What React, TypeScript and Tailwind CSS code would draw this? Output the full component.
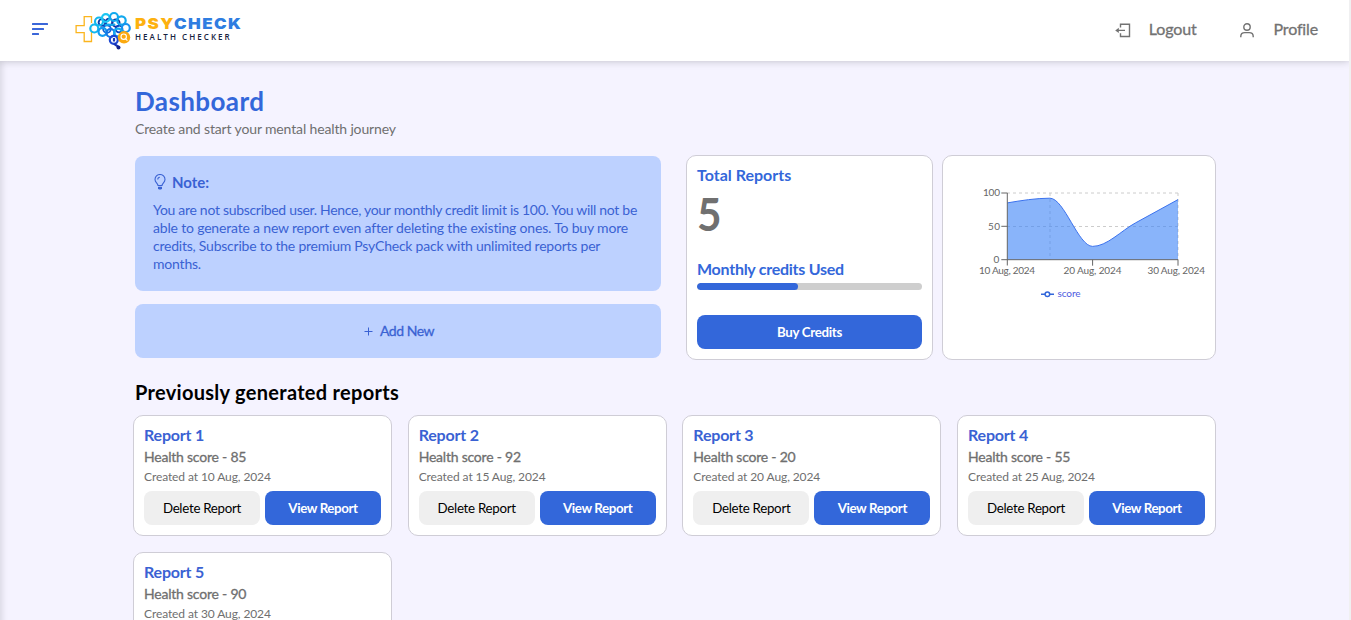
const TEXT = "font-['Lato',sans-serif] whitespace-nowrap";
const MEDIUM = "[-webkit-text-stroke:0.3px_currentColor]";

function Logo() {
  return (
    <div className="flex h-[42px] items-start">
      <svg width="58" height="42" viewBox="74 9 58 42" fill="none">
        <path d="M84.200 24.700V15.700h7.300v24.800h-7.300v-8.800h-8.100v-7z" stroke="#fbb51e" strokeWidth="1.300" />
        <path d="M91.500 22v9" stroke="#fff" strokeWidth="1.800" />
        <g strokeWidth="1.900">
          <circle cx="102" cy="21.500" r="3.400" stroke="#0a3fae" />
          <circle cx="109" cy="21" r="3.400" stroke="#0a3fae" />
          <circle cx="116" cy="22" r="3.600" stroke="#12309a" />
          <circle cx="119" cy="28" r="3.400" stroke="#0a46c4" />
          <circle cx="107" cy="28" r="3.800" stroke="#0b62d6" />
        </g>
        <g strokeWidth="2.200">
          <circle cx="94.300" cy="27.500" r="4" stroke="#12b7ee" />
          <circle cx="99" cy="20.500" r="4" stroke="#12b7ee" />
          <circle cx="105.800" cy="17" r="3.800" stroke="#1bc5f2" />
          <circle cx="114" cy="16" r="4" stroke="#12a9ee" />
          <circle cx="121.500" cy="19.500" r="4.200" stroke="#12a9ee" />
          <circle cx="125.800" cy="27" r="4" stroke="#1893ee" />
          <circle cx="102.500" cy="30.800" r="4" stroke="#129cf0" />
          <circle cx="110.500" cy="32" r="4" stroke="#1377e6" />
          <circle cx="118" cy="31.500" r="3.800" stroke="#12a9ee" />
          <path d="M105 24.500c3-2.500 7 1 10-1.500" stroke="#12a9ee" />
          <circle cx="113.800" cy="38.800" r="4" stroke="#1e48d2" />
          <path d="M114 37v3.500M114.500 42.500c1 2.500 3 1.500 4 4" stroke="#1733b5" />
        </g>
        <circle cx="118.500" cy="46.500" r="2" fill="#12208a" />
        <circle cx="124" cy="36.300" r="6.200" fill="#fba90f" />
        <circle cx="123.700" cy="35.700" r="2.700" stroke="#fff" strokeWidth="1.100" />
        <path d="M125.600 37.800l1.800 1.900" stroke="#fff" strokeWidth="1.100" />
      </svg>
      <div className="flex flex-col pl-[3px] pt-[5px]">
        <div className="w-max origin-left scale-x-[1.130] whitespace-nowrap font-['Inter',sans-serif] text-[15px] font-black leading-[18px] tracking-[1.250px] text-[#2f7de1]">
          <span className="text-[#fdb10f]">PSY</span>CHECK
        </div>
        <div className="w-max whitespace-nowrap font-['Open_Sans',sans-serif] text-[8px] font-semibold leading-[8px] tracking-[2.050px] text-[#17233f]">
          HEALTH CHECKER
        </div>
      </div>
    </div>
  );
}

function Header() {
  return (
    <header className="relative z-10 flex h-[61px] shrink-0 items-center bg-white pl-[32px] pr-[31px] shadow-[0_0_8px_rgba(0,0,0,0.22)]">
      <svg width="16" height="12" viewBox="0 0 16 12" className="mb-[3px]" fill="#3a66d9">
        <rect y="0" width="16" height="2" rx="0.5" />
        <rect y="5" width="12" height="2" rx="0.5" />
        <rect y="10" width="7" height="2" rx="0.5" />
      </svg>
      <div className="ml-[26px]">
        <Logo />
      </div>
      <nav className="ml-auto flex items-center text-[#727272]">
        <svg width="16" height="15" viewBox="0 0 16 15" fill="none" stroke="currentColor" strokeWidth="1.400">
          <path d="M5.500 4.500V1.200h9v12.300h-9v-3.300M10 7.400H2" />
          <path d="M3.800 4.800L.2 7.400l3.600 2.600z" fill="currentColor" stroke="none" />
        </svg>
        <span className={`${TEXT} ${MEDIUM} -mt-[3px] ml-[18px] text-[16px] leading-[20px] tracking-[-0.150px]`}>Logout</span>
        <svg className="ml-[43px]" width="14" height="15" viewBox="0 0 14 15" fill="none" stroke="currentColor" strokeWidth="1.400">
          <circle cx="7" cy="4" r="3.200" />
          <path d="M.8 14.300v-1c0-2.200 1.800-3.700 4-3.700h4.400c2.200 0 4 1.500 4 3.700v1" />
        </svg>
        <span className={`${TEXT} ${MEDIUM} -mt-[3px] ml-[20px] text-[16px] leading-[20px] tracking-[-0.150px]`}>Profile</span>
      </nav>
    </header>
  );
}

function NoteCard() {
  return (
    <section className="h-[135px] rounded-[8px] bg-[#bdd1ff] px-[18px] pt-[17px] text-[#3a62d3]">
      <div className="flex h-[18px] items-center">
        <svg className="ml-[1px] mr-[6px]" width="12" height="16" viewBox="0 0 12 16" fill="none" stroke="currentColor" strokeWidth="1.100">
          <path d="M4 11.500C4 9.500 1 8.500 1 5.500a5 5 0 0 1 10 0c0 3-3 4-3 6zM3.800 5.500c0-1.300.8-2.200 2-2.200M4.200 13.300h3.600" />
          <path d="M4 13h4v1.300L7.200 15.500H4.800L4 14.300z" fill="currentColor" stroke="none" />
        </svg>
        <h2 className={`${TEXT} text-[15px] font-bold`}>Note:</h2>
      </div>
      <div className="mt-[10px] text-[14px] leading-[18px]">
        <p className={`${TEXT} w-max tracking-[-0.300px]`}>You are not subscribed user. Hence, your monthly credit limit is 100. You will not be</p>
        <p className={`${TEXT} w-max tracking-[-0.180px]`}>able to generate a new report even after deleting the existing ones. To buy more</p>
        <p className={`${TEXT} w-max tracking-[-0.230px]`}>credits, Subscribe to the premium PsyCheck pack with unlimited reports per</p>
        <p className={`${TEXT} w-max tracking-[-0.200px]`}>months.</p>
      </div>
    </section>
  );
}

function AddNew() {
  return (
    <button className="mt-[13px] flex h-[54px] w-full items-center justify-center rounded-[8px] bg-[#bdd1ff] pl-[2px] text-[#3a62d3]">
      <svg className="mr-[7px]" width="9" height="9" viewBox="0 0 9 9" stroke="currentColor" strokeWidth="1">
        <path d="M4.500 .5v8M.5 4.500h8" />
      </svg>
      <span className={`${TEXT} ${MEDIUM} text-[14px] leading-[20px] tracking-[-0.450px]`}>Add New</span>
    </button>
  );
}

function Totals() {
  return (
    <section className="h-[205px] w-[247px] rounded-[10px] border border-[#cfcdd6] bg-white px-[10px] pt-[9px] text-[#3367da]">
      <h3 className={`${TEXT} w-max text-[16px] font-bold leading-[20px]`}>Total Reports</h3>
      <p className={`${TEXT} mt-[1px] w-max origin-left scale-x-[0.920] text-[46px] font-bold leading-[56px] text-[#707070]`}>5</p>
      <h3 className={`${TEXT} mt-[17px] w-max text-[16px] font-bold leading-[20px] tracking-[-0.260px]`}>Monthly credits Used</h3>
      <div className="mt-[4px] h-[7px] overflow-hidden rounded-full bg-[#cecece]">
        <div className="h-full w-[101px] rounded-full bg-[#3367da]" />
      </div>
      <button className="mt-[25px] flex h-[34px] w-full items-center justify-center rounded-[8px] bg-[#3367da] pt-[2px] text-white">
        <span className={`${TEXT} text-[13.300px] font-bold tracking-[-0.300px]`}>Buy Credits</span>
      </button>
    </section>
  );
}

const CURVE =
  "M1007.300 202.900C1021.550 200.500 1035.500 198.200 1049.900 198.200C1064.200 198.200 1078.300 246.400 1092.600 246.400C1106.900 246.400 1121.100 230.800 1135.300 223C1149.600 215.200 1163.800 207.400 1178 199.600";

function Chart() {
  return (
    <section className="h-[205px] w-[274px] rounded-[10px] border border-[#cfcdd6] bg-white">
      <svg width="272" height="203" viewBox="943 156 272 203" fill="none">
        <g stroke="#ccc" strokeDasharray="3 3">
          <path d="M1007 193H1178M1007 226.500H1178M1050 193V260M1178 193V260" />
        </g>
        <path d={`${CURVE}V259.700H1007.300Z`} fill="#3b82f6" fillOpacity="0.6" />
        <path d={CURVE} stroke="#3b72ee" />
        <g stroke="#666">
          <path d="M1007.300 193V265.500M1001.300 193h6M1001.300 226.300h6M1001.300 259.700H1178M1092.600 259.700v6M1178 259.700v6" />
        </g>
        <g fill="#666" fontFamily="Lato, sans-serif" fontSize="10">
          <text x="983" y="196.300" textLength="17">100</text>
          <text x="988" y="230" textLength="12">50</text>
          <text x="993.500" y="263.300">0</text>
          <text x="979" y="274" textLength="56">10 Aug, 2024</text>
          <text x="1063.500" y="274" textLength="58">20 Aug, 2024</text>
          <text x="1147.500" y="274" textLength="57.500">30 Aug, 2024</text>
        </g>
        <g stroke="#3367da" strokeWidth="1.500">
          <path d="M1041 294.300h4M1050 294.300h4" />
          <circle cx="1047.400" cy="294.300" r="2.300" />
        </g>
        <text x="1057.500" y="297" fill="#4d5be0" fontFamily="Lato, sans-serif" fontSize="10" textLength="23">
          score
        </text>
      </svg>
    </section>
  );
}

const REPORTS = [
  { id: 1, score: 85, date: "10 Aug, 2024" },
  { id: 2, score: 92, date: "15 Aug, 2024" },
  { id: 3, score: 20, date: "20 Aug, 2024" },
  { id: 4, score: 55, date: "25 Aug, 2024" },
  { id: 5, score: 90, date: "30 Aug, 2024" },
];

function ReportCard({ id, score, date }: { id: number; score: number; date: string }) {
  return (
    <article className="h-[121px] rounded-[10px] border border-[#cfcdd6] bg-white px-[10px] pt-[9px] text-[#6f6f6f]">
      <h3 className={`${TEXT} w-max text-[16px] font-bold leading-[20px] tracking-[-0.200px] text-[#3a62d3]`}>Report {id}</h3>
      <p className={`${TEXT} ${MEDIUM} mt-[3px] w-max text-[14px] leading-[18px] tracking-[-0.220px]`}>Health score - {score}</p>
      <p className={`${TEXT} mt-[2px] w-max text-[12px] leading-[18px] tracking-[-0.100px]`}>Created at {date}</p>
      <div className="mt-[5px] grid grid-cols-2 gap-[5px]">
        <button className="flex h-[34px] items-center justify-center rounded-[8px] bg-[#efefef] pt-[2px] text-black">
          <span className={`${TEXT} text-[13.300px] tracking-[-0.280px]`}>Delete Report</span>
        </button>
        <button className="flex h-[34px] items-center justify-center rounded-[8px] bg-[#3367da] pt-[2px] text-white">
          <span className={`${TEXT} text-[13.300px] font-bold tracking-[-0.380px]`}>View Report</span>
        </button>
      </div>
    </article>
  );
}

export default function App() {
  return (
    <div className="flex h-[620px] flex-col overflow-hidden border-r-2 border-[#f0f0f1] bg-[#f5f3ff]">
      <Header />
      <main className="flex-1 pl-[135px] pr-[133px] pt-[25px] shadow-[inset_6px_0_6px_-4px_rgba(0,0,0,0.12)]">
        <h1 className={`${TEXT} w-max text-[26px] font-bold leading-[30px] tracking-[0.400px] text-[#3367da]`}>Dashboard</h1>
        <p className={`${TEXT} mt-[4px] w-max text-[14px] leading-[18px] tracking-[-0.140px] text-[#6f6f6f]`}>
          Create and start your mental health journey
        </p>
        <div className="mt-[17px] flex">
          <div className="w-[526px] pt-[1px]">
            <NoteCard />
            <AddNew />
          </div>
          <div className="ml-[25px] flex gap-[9px]">
            <Totals />
            <Chart />
          </div>
        </div>
        <h2 className={`${TEXT} mt-[20px] w-max text-[20px] font-bold leading-[24px] tracking-[0.290px] text-black`}>
          Previously generated reports
        </h2>
        <div className="-ml-[2px] mt-[11px] grid w-[1083px] grid-cols-4 gap-x-[15.700px] gap-y-[16px]">
          {REPORTS.map((r) => (
            <ReportCard key={r.id} {...r} />
          ))}
        </div>
      </main>
    </div>
  );
}
